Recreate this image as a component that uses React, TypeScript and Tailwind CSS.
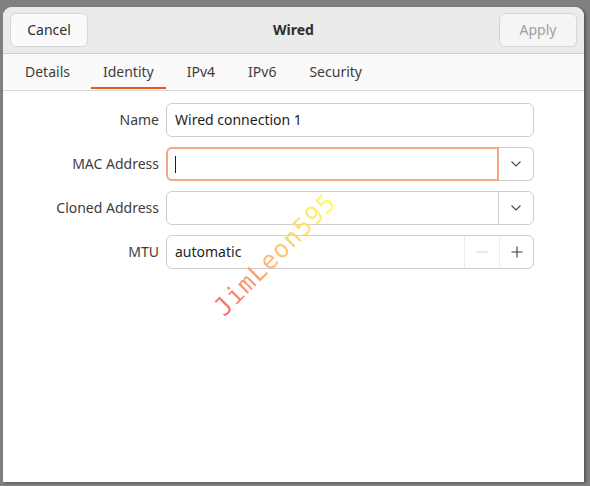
import React from "react";

const font = { fontFamily: '"Noto Sans", "Open Sans", sans-serif' };

function Chevron() {
  return (
    <svg width="12" height="8" viewBox="0 0 12 8" fill="none">
      <path d="M1.5 1.5 L6 6 L10.5 1.5" stroke="#4a4a4a" strokeWidth="1.2" />
    </svg>
  );
}

function Row({ label, children }: { label: string; children: React.ReactNode }) {
  return (
    <div className="flex items-center gap-[7px]">
      <div className="w-[152px] text-right text-[14px] text-[#3d3d3d] pb-[2px]">{label}</div>
      {children}
    </div>
  );
}

export default function App() {
  const tabs = ["Details", "Identity", "IPv4", "IPv6", "Security"];
  return (
    <div style={font} className="relative w-[590px] h-[486px] overflow-hidden bg-[#808080] pt-[7px] pl-[3px]">
      <div className="relative w-[581px] h-[475px] rounded-t-[9px] bg-white overflow-hidden shadow-[2px_1px_3px_rgba(0,0,0,0.35)]">
        {/* header bar */}
        <div className="h-[47px] bg-[#ebebeb] border-b border-[#cfcfcf] flex items-center justify-between px-[7px]">
          <button className="w-[78px] h-[34px] rounded-[6px] border border-[#d6d6d6] bg-[#fafafa] text-[14px] text-[#2e2e2e] pb-[2px]">
            Cancel
          </button>
          <div className="text-[14px] font-bold text-[#2e2e2e] pb-[2px]">Wired</div>
          <button className="w-[78px] h-[34px] rounded-[6px] border border-[#d6d6d6] bg-[#f5f5f5] text-[14px] text-[#a0a0a0] pb-[2px]">
            Apply
          </button>
        </div>

        {/* tabs */}
        <div className="h-[37px] bg-[#fafafa] border-b border-[#d6d6d6] flex gap-[9px] pl-[10px]">
          {tabs.map((t) => (
            <div
              key={t}
              className="relative h-full flex items-center px-[12px] pb-[2px] text-[14px] text-[#3d3d3d]"
            >
              {t}
              {t === "Identity" && (
                <div className="absolute left-0 right-0 bottom-[1px] h-[2px] bg-[#e95420]" />
              )}
            </div>
          ))}
        </div>

        {/* form */}
        <div className="pt-[12px] pl-[4px] flex flex-col gap-[10px]">
          <Row label="Name">
            <div className="w-[368px] h-[34px] rounded-[6px] border border-[#cdcdcd] bg-white flex items-center px-[8px] pb-[2px] text-[14px] text-[#1e1e1e]">
              Wired connection 1
            </div>
          </Row>
          <Row label="MAC Address">
            <div className="w-[368px] h-[34px] flex">
              <div className="flex-1 rounded-l-[6px] border-2 border-[#f3a68a] flex items-center px-[7px]">
                <div className="w-[1px] h-[17px] bg-[#1e1e1e]" />
              </div>
              <div className="w-[35px] rounded-r-[6px] border border-l-0 border-[#cdcdcd] flex items-center justify-center">
                <Chevron />
              </div>
            </div>
          </Row>
          <Row label="Cloned Address">
            <div className="w-[368px] h-[34px] flex rounded-[6px] border border-[#cdcdcd]">
              <div className="flex-1 border-r border-[#cdcdcd]" />
              <div className="w-[34px] flex items-center justify-center">
                <Chevron />
              </div>
            </div>
          </Row>
          <Row label="MTU">
            <div className="w-[368px] h-[34px] flex rounded-[6px] border border-[#cdcdcd]">
              <div className="flex-1 flex items-center px-[8px] pb-[2px] text-[14px] text-[#1e1e1e]">automatic</div>
              <div className="w-[35px] border-l border-[#ebebeb] flex items-center justify-center">
                <svg width="12" height="12" viewBox="0 0 12 12">
                  <path d="M0.5 6 H11.5" stroke="#cfcfcf" strokeWidth="1" />
                </svg>
              </div>
              <div className="w-[34px] border-l border-[#ebebeb] flex items-center justify-center">
                <svg width="12" height="12" viewBox="0 0 12 12">
                  <path d="M0.5 6 H11.5 M6 0.5 V11.5" stroke="#3a3a3a" strokeWidth="1.1" />
                </svg>
              </div>
            </div>
          </Row>
        </div>
      </div>

      {/* watermark */}
      <div
        className="absolute left-[195px] top-[240px] -rotate-45 text-[25px] tracking-[1px] leading-[30px] bg-gradient-to-r from-[#f26a6a] via-[#ffc070] to-[#ffff60] bg-clip-text text-transparent"
        style={{ fontFamily: '"DejaVu Sans Mono", monospace' }}
      >
        JimLeon595
      </div>
    </div>
  );
}
